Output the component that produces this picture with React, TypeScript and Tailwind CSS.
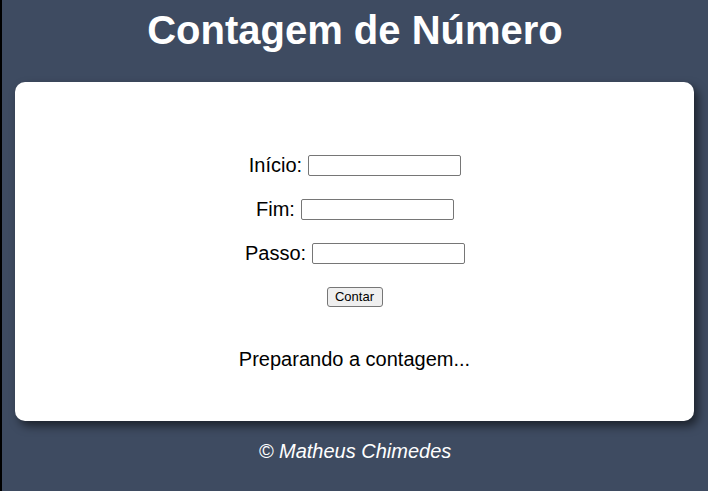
import React from 'react';

const fieldRows = [
  { label: 'Início:', id: 'inicio' },
  { label: 'Fim:', id: 'fim' },
  { label: 'Passo:', id: 'passo' },
];

export default function App() {
  return (
    <div
      className="min-h-[491px] bg-[#3e4b61] border-l-2 border-black text-black"
      style={{ fontFamily: '"Liberation Sans", Arial, sans-serif' }}
    >
      <h1 className="pt-[7px] text-center text-[40px] leading-[46px] font-bold text-white">
        Contagem de Número
      </h1>

      <section className="mt-[29px] ml-[13px] mr-[14px] bg-white rounded-[10px] shadow-[4px_5px_10px_rgba(0,0,0,0.55)] pt-[72px] pb-[50px]">
        <div className="flex flex-col items-center gap-[21px]">
          {fieldRows.map((row) => (
            <label key={row.id} htmlFor={row.id} className="flex items-center text-[20px] leading-[23px] pl-[1px]">
              <span>{row.label}</span>
              <input
                id={row.id}
                type="number"
                className="ml-[6px] w-[153px] h-[21px] border border-[#767676] rounded-[2px] bg-white px-1 text-[13px] outline-none"
              />
            </label>
          ))}
        </div>

        <div className="flex justify-center mt-[22px]">
          <button className="h-[20px] w-[56px] bg-[#efefef] border border-[#767676] rounded-[3px] text-[13px] leading-[18px] text-black">
            Contar
          </button>
        </div>

        <p className="mt-[41px] text-center text-[20px] leading-[23px]">Preparando a contagem...</p>
      </section>

      <footer className="mt-[19px] text-center text-[20px] leading-[23px] italic text-white">
        &copy; Matheus Chimedes
      </footer>
    </div>
  );
}
